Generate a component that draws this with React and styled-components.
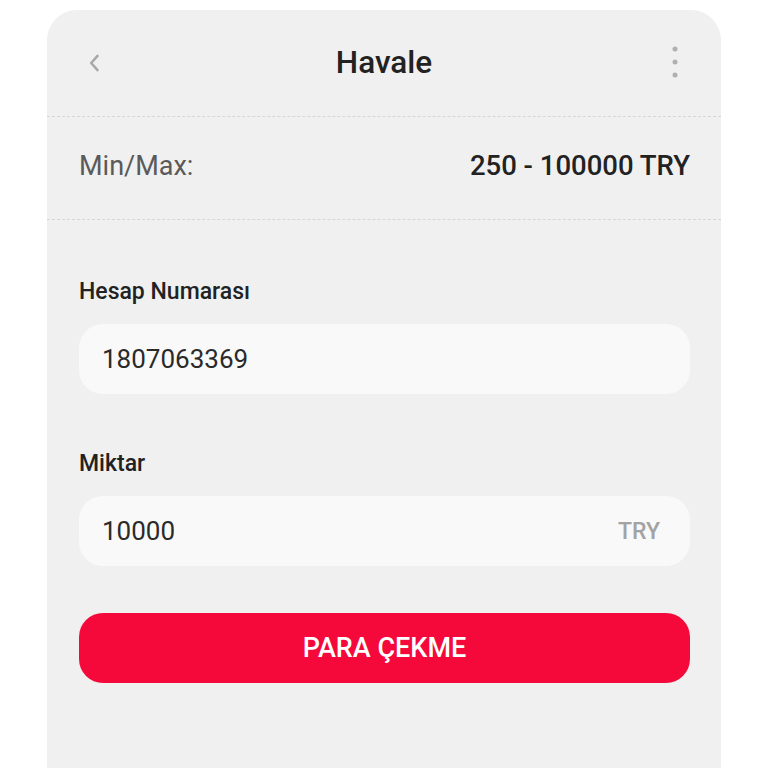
import React from "react";
import styled, { createGlobalStyle } from "styled-components";

const Global = createGlobalStyle`
  html, body { margin: 0; padding: 0; background: #ffffff; }
  body { font-family: Roboto, "Noto Sans", Arial, sans-serif; }
  * { box-sizing: border-box; }
`;

const Page = styled.div`
  padding: 10px 47px 0 47px;
  height: 768px;
  overflow: hidden;
`;

const Card = styled.div`
  background: #f0f0f0;
  border-radius: 30px 30px 0 0;
  min-height: 758px;
  display: flex;
  flex-direction: column;
`;

const Header = styled.div`
  height: 107px;
  display: grid;
  grid-template-columns: 60px 1fr 60px;
  align-items: center;
  padding: 0 30px;
  border-bottom: 1px dashed #d6d6d6;
`;

const IconBtn = styled.div`
  display: flex;
  align-items: center;
  justify-content: ${(p) => (p.$end ? "flex-end" : "flex-start")};
  padding-right: ${(p) => (p.$end ? "11px" : "0")};
`;

const Title = styled.h1`
  margin: 0;
  text-align: center;
  font-size: 31.5px;
  font-weight: 500;
  color: #222;
  line-height: 1;
`;

const InfoRow = styled.div`
  height: 103px;
  display: flex;
  align-items: center;
  justify-content: space-between;
  padding: 0 31px 5px 32px;
  border-bottom: 1px dashed #d6d6d6;
`;

const InfoLabel = styled.span`
  font-size: 27px;
  color: #5a5a5a;
  font-weight: 400;
`;

const InfoValue = styled.span`
  font-size: 27.5px;
  color: #222;
  font-weight: 500;
`;

const Form = styled.div`
  padding: 59px 31px 0 32px;
  display: flex;
  flex-direction: column;
`;

const Label = styled.label`
  font-size: 23px;
  line-height: 26px;
  font-weight: 500;
  color: #222;
  margin-bottom: 19px;
`;

const Field = styled.div`
  height: 70px;
  border-radius: 24px;
  background: #f9f9f9;
  display: flex;
  align-items: center;
  padding: 0 30px 0 23px;
  margin-bottom: ${(p) => p.$mb || 0}px;
`;

const Value = styled.span`
  flex: 1;
  font-size: 26px;
  color: #2a2a2a;
`;

const Suffix = styled.span`
  font-size: 23px;
  font-weight: 500;
  color: #a3a3a3;
`;

const Button = styled.button`
  height: 70px;
  border: none;
  border-radius: 24px;
  background: #f5083a;
  color: #fff;
  font-family: Roboto, Arial, sans-serif;
  font-size: 27px;
  font-weight: 500;
  cursor: pointer;
`;

export default function App() {
  return (
    <>
      <Global />
      <Page>
        <Card>
          <Header>
            <IconBtn>
              <svg width="34" height="34" viewBox="0 0 24 24" fill="none" stroke="#a8a8a8" strokeWidth="1.8" strokeLinecap="round" strokeLinejoin="round">
                <path d="M14.5 7 L10 12 L14.5 17" />
              </svg>
            </IconBtn>
            <Title>Havale</Title>
            <IconBtn $end>
              <svg width="10" height="36" viewBox="0 0 10 36">
                <circle cx="5" cy="4" r="2.5" fill="#b0b0b0" />
                <circle cx="5" cy="17" r="2.5" fill="#b0b0b0" />
                <circle cx="5" cy="30" r="2.5" fill="#b0b0b0" />
              </svg>
            </IconBtn>
          </Header>
          <InfoRow>
            <InfoLabel>Min/Max:</InfoLabel>
            <InfoValue>250 - 100000 TRY</InfoValue>
          </InfoRow>
          <Form>
            <Label>Hesap Numarası</Label>
            <Field $mb={57}>
              <Value>1807063369</Value>
            </Field>
            <Label>Miktar</Label>
            <Field $mb={47}>
              <Value>10000</Value>
              <Suffix>TRY</Suffix>
            </Field>
            <Button>PARA ÇEKME</Button>
          </Form>
        </Card>
      </Page>
    </>
  );
}
